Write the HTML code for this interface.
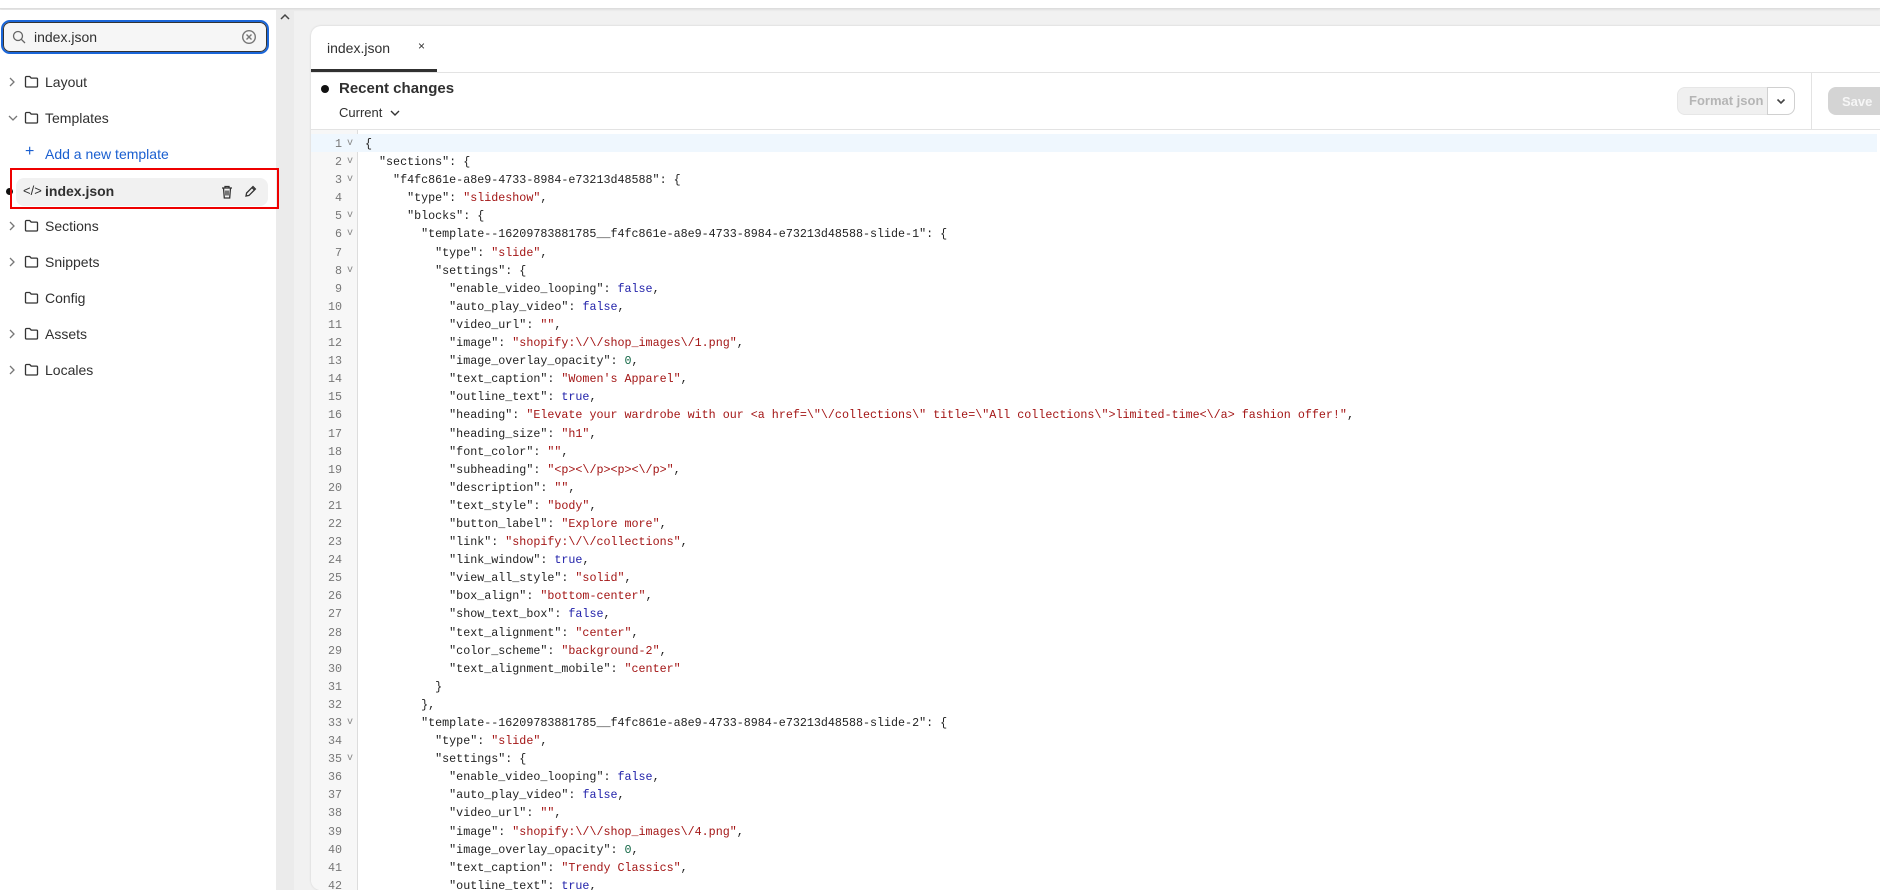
<!DOCTYPE html>
<html><head><meta charset="utf-8"><style>
*{box-sizing:border-box;margin:0;padding:0}
html,body{overflow:hidden}
body{width:1880px;height:890px;background:#f1f1f1;font-family:"Liberation Sans",sans-serif;color:#303030;position:relative}
.top{position:absolute;left:0;top:0;width:1880px;height:9px;background:#fff;border-bottom:1px solid #ddd;box-shadow:0 1px 2px rgba(0,0,0,.08)}
.side{position:absolute;left:0;top:10px;width:276px;height:880px;background:#fff}
.search{position:absolute;left:1px;top:10px;width:268px;height:34px;border:2px solid #1a66d9;border-radius:9px;background:#f6f6f6;box-shadow:inset 0 0 0 1px #333}
.search span{position:absolute;left:31px;top:7px;font-size:14px;color:#303030}
.row{position:absolute;left:0;height:36px;width:276px;font-size:14px}
.row .t{position:absolute;left:45px;top:10px}
.chev{position:absolute;left:8px;top:13px}
.fold{position:absolute;left:24px;top:11px}
.gcol{position:absolute;left:276px;top:10px;width:18px;height:880px;background:#ebebeb}
.card{position:absolute;left:311px;top:26px;width:1580px;height:864px;background:#fff;border-radius:10px;box-shadow:0 0 2px rgba(0,0,0,.15);overflow:hidden}
.tab{position:absolute;left:16px;top:14px;font-size:14px;color:#303030}
.tabx{position:absolute;left:107px;top:13px;font-size:12px}
.tabline{position:absolute;left:0;top:43px;width:126px;height:3px;background:#303030}
.hr{position:absolute;left:0;width:1580px;height:1px;background:#e3e3e3}
.mono{font-family:"Liberation Mono",monospace;font-size:11.7px}
.gut{position:absolute;left:0;top:104px;width:47px;height:780px;background:#f7f7f7;border-right:1px solid #ddd}
.code{position:absolute;left:0;top:109px;width:1580px}
.ln{position:relative;height:18.1px;line-height:18.1px;white-space:pre}
.ln .n{position:absolute;left:0;width:31px;text-align:right;color:#777}
.ln .f{position:absolute;left:36px;color:#888;font-size:10px}
.ln .c{position:absolute;left:54px;color:#222}
.s{color:#a31515}.b{color:#2222aa}.num{color:#116644}
</style></head><body>
<div class="top"></div>
<div class="side">
 <div class="search">
  <svg style="position:absolute;left:9px;top:8px" width="14" height="14" viewBox="0 0 14 14"><circle cx="6" cy="6" r="4.5" fill="none" stroke="#666" stroke-width="1.3"/><path d="M9.3 9.3L13 13" stroke="#666" stroke-width="1.3"/></svg>
  <span>index.json</span>
  <svg style="position:absolute;left:238px;top:7px" width="16" height="16" viewBox="0 0 16 16"><circle cx="8" cy="8" r="6.3" fill="none" stroke="#777" stroke-width="1.4"/><path d="M5.5 5.5l5 5M10.5 5.5l-5 5" stroke="#777" stroke-width="1.4"/></svg>
 </div>
</div>
<div class="gcol"><svg style="position:absolute;left:4px;top:3px" width="10" height="8" viewBox="0 0 10 8"><path d="M1 6l4-4 4 4" fill="none" stroke="#444" stroke-width="1.5"/></svg></div>

<div id="rows"></div>
<div style="position:absolute;left:10px;top:168px;width:269px;height:41px;border:2px solid #e00"></div>

<div class="card">
 <div class="tab">index.json</div><div class="tabx">×</div>
 <div class="tabline"></div>
 <div class="hr" style="top:46px"></div>
 <div style="position:absolute;left:10px;top:59px;width:8px;height:8px;border-radius:50%;background:#111"></div>
 <div style="position:absolute;left:28px;top:54px;font-size:15px;font-weight:bold;color:#303030">Recent changes</div>
 <div style="position:absolute;left:28px;top:79px;font-size:13px;color:#303030">Current <svg width="10" height="8" viewBox="0 0 10 8" style="margin-left:4px"><path d="M1 2l4 4 4-4" fill="none" stroke="#333" stroke-width="1.4"/></svg></div>
 <div style="position:absolute;left:1366px;top:61px;width:118px;height:28px;border-radius:8px;background:#f0f0f0;border:1px solid #e6e6e6"></div>
 <div style="position:absolute;left:1378px;top:67px;font-size:13px;font-weight:bold;color:#b5b5b5">Format json</div>
 <div style="position:absolute;left:1456px;top:61px;width:28px;height:28px;border:1px solid #d0d0d0;border-radius:0 8px 8px 0;background:#fff"><svg style="position:absolute;left:8px;top:10px" width="10" height="7" viewBox="0 0 10 7"><path d="M1.5 1.5l3.5 3.5 3.5-3.5" fill="none" stroke="#444" stroke-width="1.6"/></svg></div>
 <div style="position:absolute;left:1500px;top:46px;width:1px;height:57px;background:#e3e3e3"></div>
 <div style="position:absolute;left:1517px;top:61px;width:60px;height:28px;border-radius:8px;background:#d4d4d4;color:#f6f6f6;font-size:13px;font-weight:bold;padding:7px 0 0 14px">Save</div>
 <div class="hr" style="top:103px"></div>
 <div class="gut"></div>
 <div style="position:absolute;left:0;top:108px;width:1566px;height:18px;background:#eff7fe"></div>
 <div class="code mono" id="code"></div>
</div>
<script>
var rows=[["Layout",1,1],["Templates",1,2],["+ Add a new template",0,3],["index.json",0,4],["Sections",1,1],["Snippets",1,1],["Config",1,0],["Assets",1,1],["Locales",1,1]];
var h='';rows.forEach(function(r,i){var y=64+i*36;
if(i==2){h+='<div class="row" style="top:'+y+'px;color:#1a5fd0"><span style="position:absolute;left:25px;top:7px;font-size:16px">+</span><span class="t">Add a new template</span></div>';return;}
if(i==3){h+='<div class="row" style="top:'+y+'px"><div style="position:absolute;left:16px;top:6px;width:252px;height:28px;border-radius:8px;background:#f1f1f1"></div><div style="position:absolute;left:6px;top:16px;width:7px;height:7px;border-radius:50%;background:#111"></div><span style="position:absolute;left:23px;top:11px;font-size:13px">&lt;/&gt;</span><span class="t" style="font-weight:bold;top:11px">index.json</span><svg style="position:absolute;left:221px;top:13px" width="12" height="14" viewBox="0 0 12 14"><path d="M1 3h10M4 3V1.5h4V3M2.5 3l.8 10h5.4l.8-10M5 5.5v5M7 5.5v5" fill="none" stroke="#333" stroke-width="1.3"/></svg><svg style="position:absolute;left:244px;top:13px" width="13" height="13" viewBox="0 0 13 13"><path d="M2 11l.6-3L9 1.6l2.4 2.4L5 10.4zM8 2.6l2.4 2.4" fill="none" stroke="#333" stroke-width="1.3"/></svg></div>';return;}
h+='<div class="row" style="top:'+y+'px">';
if(r[2]==1)h+='<svg class="chev" width="8" height="10" viewBox="0 0 8 10"><path d="M2 1l4 4-4 4" fill="none" stroke="#777" stroke-width="1.3"/></svg>';
if(r[2]==2)h+='<svg class="chev" style="top:14px" width="10" height="8" viewBox="0 0 10 8"><path d="M1 2l4 4 4-4" fill="none" stroke="#777" stroke-width="1.3"/></svg>';
h+='<svg class="fold" width="15" height="13" viewBox="0 0 15 13"><path d="M1.5 2.5a1 1 0 0 1 1-1h3.2l1.5 1.6h5.3a1 1 0 0 1 1 1v6.9a1 1 0 0 1-1 1H2.5a1 1 0 0 1-1-1z" fill="none" stroke="#333" stroke-width="1.3"/></svg><span class="t">'+r[0]+'</span></div>';});
document.getElementById('rows').innerHTML=h;
function k(x){return '"'+x+'"'}
function S(x){return '<span class="s">"'+x+'"</span>'}
function B(x){return '<span class="b">'+x+'</span>'}
var T='template--16209783881785__f4fc861e-a8e9-4733-8984-e73213d48588-slide-';
var L=[[0,'{',1],[1,k('sections')+': {',1],[2,k('f4fc861e-a8e9-4733-8984-e73213d48588')+': {',1],[3,k('type')+': '+S('slideshow')+',',0],[3,k('blocks')+': {',1],[4,k(T+'1')+': {',1],[5,k('type')+': '+S('slide')+',',0],[5,k('settings')+': {',1],
[6,k('enable_video_looping')+': '+B('false')+','],[6,k('auto_play_video')+': '+B('false')+','],[6,k('video_url')+': '+S('')+','],[6,k('image')+': '+S('shopify:\\/\\/shop_images\\/1.png')+','],[6,k('image_overlay_opacity')+': <span class="num">0</span>,'],[6,k('text_caption')+': '+S("Women's Apparel")+','],[6,k('outline_text')+': '+B('true')+','],
[6,k('heading')+': '+S('Elevate your wardrobe with our &lt;a href=\\"\\/collections\\" title=\\"All collections\\"&gt;limited-time&lt;\\/a&gt; fashion offer!')+','],[6,k('heading_size')+': '+S('h1')+','],[6,k('font_color')+': '+S('')+','],[6,k('subheading')+': '+S('&lt;p&gt;&lt;\\/p&gt;&lt;p&gt;&lt;\\/p&gt;')+','],[6,k('description')+': '+S('')+','],[6,k('text_style')+': '+S('body')+','],[6,k('button_label')+': '+S('Explore more')+','],[6,k('link')+': '+S('shopify:\\/\\/collections')+','],[6,k('link_window')+': '+B('true')+','],[6,k('view_all_style')+': '+S('solid')+','],[6,k('box_align')+': '+S('bottom-center')+','],[6,k('show_text_box')+': '+B('false')+','],[6,k('text_alignment')+': '+S('center')+','],[6,k('color_scheme')+': '+S('background-2')+','],[6,k('text_alignment_mobile')+': '+S('center')],
[5,'}'],[4,'},'],[4,k(T+'2')+': {',1],[5,k('type')+': '+S('slide')+',',0],[5,k('settings')+': {',1],
[6,k('enable_video_looping')+': '+B('false')+','],[6,k('auto_play_video')+': '+B('false')+','],[6,k('video_url')+': '+S('')+','],[6,k('image')+': '+S('shopify:\\/\\/shop_images\\/4.png')+','],[6,k('image_overlay_opacity')+': <span class="num">0</span>,'],[6,k('text_caption')+': '+S('Trendy Classics')+','],[6,k('outline_text')+': '+B('true')+',']];
var c='';L.forEach(function(l,i){c+='<div class="ln"><span class="n">'+(i+1)+'</span>'+(l[2]?'<span class="f">v</span>':'')+'<span class="c">'+'  '.repeat(l[0])+l[1]+'</span></div>'});
document.getElementById('code').innerHTML=c;
</script>
</body></html>
